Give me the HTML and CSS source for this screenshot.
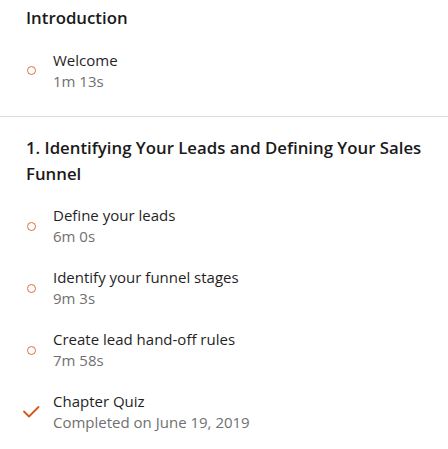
FILE: index.html
```html
<!DOCTYPE html>
<html>
<head>
<meta charset="utf-8">
<link rel="stylesheet" href="styles.css">
</head>
<body>
<div class="toc">
  <section class="chapter chapter-first">
    <h2 class="chapter-title">Introduction</h2>
    <ul class="items">
      <li class="item">
        <span class="status"><span class="ring"></span></span>
        <div class="info">
          <div class="name">Welcome</div>
          <div class="meta">1m 13s</div>
        </div>
      </li>
    </ul>
  </section>
  <section class="chapter">
    <h2 class="chapter-title">1. Identifying Your Leads and Defining Your Sales Funnel</h2>
    <ul class="items">
      <li class="item">
        <span class="status"><span class="ring"></span></span>
        <div class="info">
          <div class="name">Define your leads</div>
          <div class="meta">6m 0s</div>
        </div>
      </li>
      <li class="item">
        <span class="status"><span class="ring"></span></span>
        <div class="info">
          <div class="name">Identify your funnel stages</div>
          <div class="meta">9m 3s</div>
        </div>
      </li>
      <li class="item">
        <span class="status"><span class="ring"></span></span>
        <div class="info">
          <div class="name">Create lead hand-off rules</div>
          <div class="meta">7m 58s</div>
        </div>
      </li>
      <li class="item">
        <span class="status">
          <svg class="check" width="18" height="14" viewBox="0 0 18 14"><path d="M2 6.5 L7 11.5 L16.5 2" fill="none" stroke="#d4581c" stroke-width="1.8" stroke-linecap="round" stroke-linejoin="round"/></svg>
        </span>
        <div class="info">
          <div class="name">Chapter Quiz</div>
          <div class="meta">Completed on June 19, 2019</div>
        </div>
      </li>
    </ul>
  </section>
</div>
</body>
</html>
```
FILE: styles.css
```css
html, body {
  margin: 0;
  padding: 0;
  background: #ffffff;
}
body {
  font-family: "Open Sans", "Noto Sans", sans-serif;
  color: #1f1f1f;
}
.toc {
  width: 448px;
}
.chapter {
  padding: 18px 14px 24px 26px;
  border-top: 1px solid #dcdcdc;
}
.chapter-first {
  padding-top: 5px;
  border-top: none;
}
.chapter-title {
  margin: 0;
  font-size: 16.8px;
  font-weight: 600;
  line-height: 26px;
  color: #1a1a1a;
}
.items {
  list-style: none;
  margin: 18.5px 0 0;
  padding: 0;
  display: flex;
  flex-direction: column;
  gap: 20px;
}
.item {
  display: flex;
  align-items: center;
}
.status {
  width: 27px;
  display: flex;
  justify-content: center;
  align-items: center;
  flex-shrink: 0;
}
.ring {
  width: 7px;
  height: 7px;
  border: 1.4px solid #d8703c;
  border-radius: 50%;
  margin-left: -17px;
}
.check {
  margin-left: -17px;
}
.info {
  display: flex;
  flex-direction: column;
}
.name {
  font-size: 15px;
  line-height: 21px;
  color: #1f1f1f;
}
.meta {
  font-size: 15px;
  line-height: 21px;
  color: #707070;
}
```
